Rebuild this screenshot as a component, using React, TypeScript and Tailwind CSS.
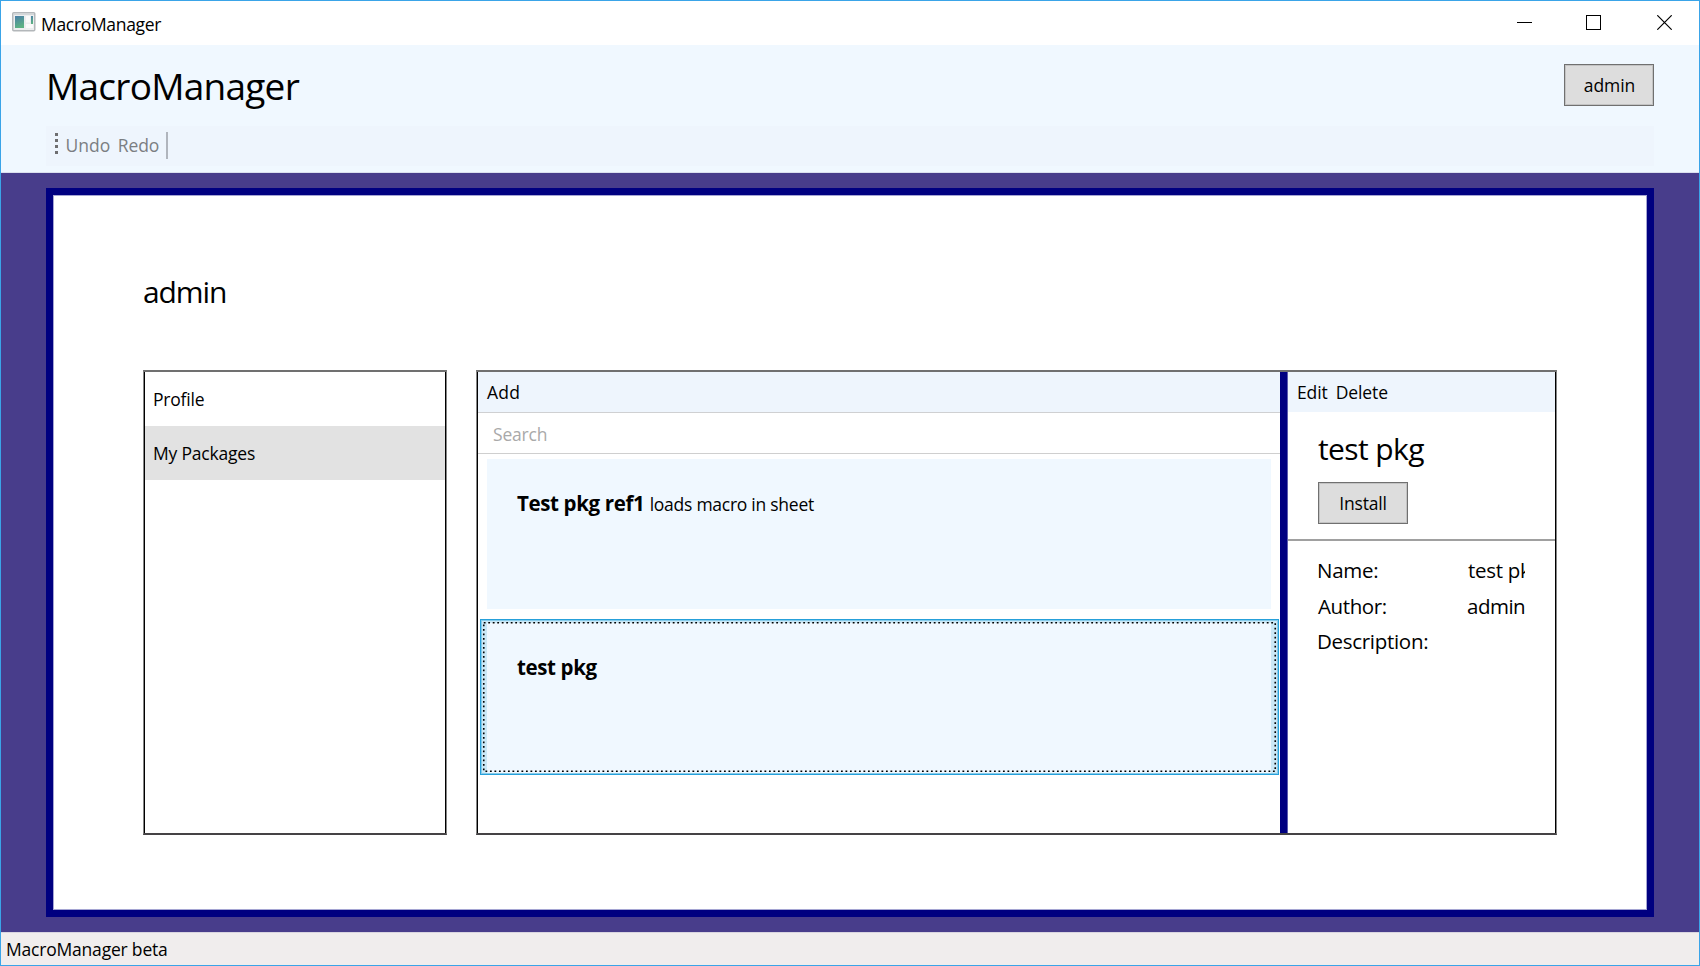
import type { ReactNode } from "react";

function AppIcon() {
  return (
    <svg width="24" height="20" viewBox="0 0 24 20" className="shrink-0">
      <defs>
        <linearGradient id="pane" x1="0" y1="0" x2="0.3" y2="1">
          <stop offset="0" stopColor="#4a7ea8" />
          <stop offset="1" stopColor="#5cb283" />
        </linearGradient>
      </defs>
      <rect x="0.75" y="0.75" width="22" height="18" rx="1" fill="#eceeef" stroke="#b3b7ba" strokeWidth="1.5" />
      <rect x="1.5" y="1.5" width="20.5" height="1.5" fill="#d3d7d9" />
      <rect x="3" y="4" width="9" height="12" fill="url(#pane)" />
      <rect x="14" y="4" width="4" height="6.5" fill="#fafafa" />
      <rect x="14" y="12" width="7" height="4" fill="#fafafa" />
      <rect x="19" y="4" width="2" height="8" fill="url(#pane)" />
    </svg>
  );
}

function PushButton({ children }: { children: ReactNode }) {
  return (
    <button className="flex h-[42px] w-[90px] items-center justify-center border border-[#707070] bg-[#dddddd] shadow-[inset_0_0_0_1px_#c3c3c3]">
      {children}
    </button>
  );
}

function TitleBar() {
  return (
    <div className="flex h-11 shrink-0 items-center bg-white pl-[11px] pr-[27px]">
      <div className="pb-0.5">
        <AppIcon />
      </div>
      <span className="ml-[5px] flex-1 pt-px tracking-[-0.32px]">MacroManager</span>
      <svg width="15" height="15" className="mb-px mr-[54px]" shapeRendering="crispEdges">
        <path d="M0 7.5h15" stroke="#000" />
      </svg>
      <svg width="15" height="15" className="mb-px mr-14" shapeRendering="crispEdges">
        <rect x="0.5" y="0.5" width="14" height="14" fill="none" stroke="#000" />
      </svg>
      <svg width="15" height="15" className="mb-px">
        <path d="M0.3 0.3l14.4 14.4M14.7 0.3L0.3 14.7" stroke="#000" strokeWidth="1.2" />
      </svg>
    </div>
  );
}

function Header() {
  return (
    <header className="h-32 shrink-0 border-b border-[#dbe0ee] bg-[#f0f8ff] px-[45px]">
      <div className="flex h-[81px] items-start justify-between pt-[18px]">
        <h1 className="text-[37px] leading-[46px] tracking-[-0.75px]">MacroManager</h1>
        <div className="pt-px">
          <PushButton>
            <span className="pl-px tracking-[-0.1px]">admin</span>
          </PushButton>
        </div>
      </div>
      <div className="flex h-10 items-center bg-[#eef5fd] pb-0.5 pl-[9px] text-[#7b7e82]">
        <div className="flex flex-col gap-[3px] pb-1">
          <i className="size-[3px] bg-[#6e6e70]" />
          <i className="size-[3px] bg-[#6e6e70]" />
          <i className="size-[3px] bg-[#6e6e70]" />
          <i className="size-[3px] bg-[#6e6e70]" />
        </div>
        <span className="ml-[7.5px]">Undo</span>
        <span className="ml-[7.5px] tracking-[-0.1px]">Redo</span>
        <i className="ml-[7px] h-[27px] w-[1.5px] bg-[#b0b5bd]" />
      </div>
    </header>
  );
}

function Frame({ className, children }: { className: string; children: ReactNode }) {
  return (
    <div className={`h-[465px] border-x border-y-2 border-x-[#858585] border-t-[#707070] border-b-[#454345] ${className}`}>
      <div className="flex h-full border-x border-black">{children}</div>
    </div>
  );
}

function PackageCard({ name, summary }: { name: string; summary?: string }) {
  return (
    <div className="h-[150px] bg-[#f0f8ff] px-[30px] pt-[30px] leading-[29px]">
      <b className="text-[20.5px] tracking-[-0.36px]">{name}</b>
      {summary && <span className="pl-px tracking-[-0.26px]"> {summary}</span>}
    </div>
  );
}

function PackageList() {
  return (
    <section className="flex w-[802px] flex-col">
      <div className="flex h-[41px] items-center border-b border-[#cfd0d2] bg-[#eef5fd] pl-[9px]">
        <span className="tracking-[0.2px]">Add</span>
      </div>
      <div className="flex h-[41px] items-center border-b border-[#cfcfcf] pl-[15px] pt-px text-[#a9a9a9]">
        <span className="tracking-[-0.2px]">Search</span>
      </div>
      <div className="px-[9px] pt-[5px]">
        <PackageCard name="Test pkg ref1" summary="loads macro in sheet" />
      </div>
      <div className="relative ml-0.5 mr-px mt-2.5 h-[156px] border border-[#26a0da] bg-[#cbe8f6] pl-1.5 pr-[7px] pt-[3px] shadow-[inset_0_0_0_1px_#86cbea]">
        <PackageCard name="test pkg" />
        <svg className="absolute left-0 top-0 h-full w-full">
          <rect x="2.75" y="2.75" width="791.5" height="148.5" fill="none" stroke="#000" strokeWidth="1.6" strokeDasharray="1.8 2.7" />
        </svg>
      </div>
    </section>
  );
}

function Details() {
  return (
    <section className="flex w-[267px] flex-col">
      <div className="flex h-10 items-center gap-2 bg-[#eef5fd] pl-[9px]">
        <span className="tracking-[-0.1px]">Edit</span>
        <span className="tracking-[-0.1px]">Delete</span>
      </div>
      <div className="h-[129px] border-b-2 border-[#a0a0a0] pl-[30px] pt-[17px]">
        <h2 className="mb-[13px] text-[30px] leading-10 tracking-[-0.6px]">test pkg</h2>
        <PushButton>
          <span className="tracking-[-0.15px]">Install</span>
        </PushButton>
      </div>
      <dl className="mr-[30px] grid auto-rows-[35.5px] grid-cols-[149px_1fr] pl-[29px] pt-3 text-[20.5px] leading-[35.5px]">
        <dt className="tracking-[-0.25px]">Name:</dt>
        <dd className="overflow-hidden whitespace-nowrap pl-0.5 tracking-[-0.3px]">test pkg</dd>
        <dt className="pl-px tracking-[-0.4px]">Author:</dt>
        <dd className="whitespace-nowrap pl-px tracking-[-0.5px]">admin</dd>
        <dt className="tracking-[-0.3px]">Description:</dt>
      </dl>
    </section>
  );
}

export default function App() {
  return (
    <div className="flex h-[966px] w-[1700px] flex-col overflow-hidden border border-[#3aa4e8] font-['Open_Sans','Noto_Sans',sans-serif] text-[17.5px] leading-6 text-black">
      <TitleBar />
      <Header />
      <main className="flex-1 bg-[#483d8b] px-[45px] py-[15px]">
        <div className="h-full border-[7px] border-[#000080] bg-white px-[90px] pt-[77px] shadow-[inset_0_0_0_1px_#a5a5d3]">
          <h2 className="mb-[58px] text-[30px] leading-10 tracking-[-1.1px]">admin</h2>
          <div className="flex gap-[29px]">
            <Frame className="w-[304px]">
              <nav className="w-full">
                <div className="flex h-[54px] items-center pl-2 tracking-[-0.2px]">Profile</div>
                <div className="flex h-[54px] items-center bg-[#e2e2e2] pl-2 tracking-[-0.2px]">My Packages</div>
              </nav>
            </Frame>
            <Frame className="w-[1081px]">
              <PackageList />
              <div className="w-2 border-r border-[#5c5cae] bg-[#000080]" />
              <Details />
            </Frame>
          </div>
        </div>
      </main>
      <footer className="flex h-[33px] shrink-0 items-center border-t border-[#d9d5e0] bg-[#f0eded] pl-[5px]">
        <span className="tracking-[-0.2px]">MacroManager beta</span>
      </footer>
    </div>
  );
}
